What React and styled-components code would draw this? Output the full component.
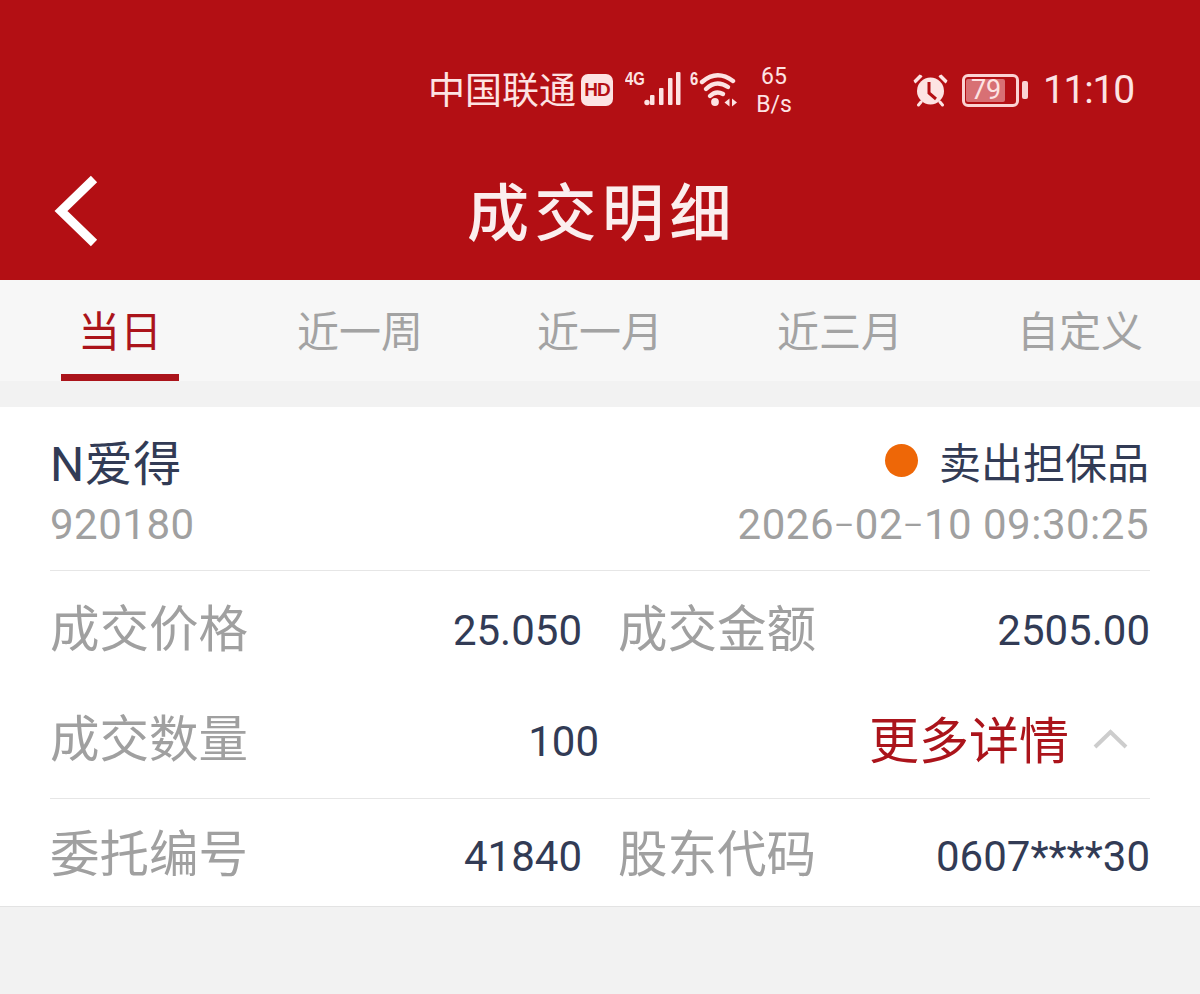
import React from 'react'
import styled, { createGlobalStyle } from 'styled-components'

const Global = createGlobalStyle`
  html, body { margin: 0; padding: 0; background: #f2f2f2; }
  body { font-family: Roboto, "Noto Sans CJK SC", sans-serif; overflow: hidden; }
`

const Page = styled.div`
  width: 1200px;
  height: 994px;
  background: #f2f2f2;
  overflow: hidden;
`

const Header = styled.header`
  background: #b30f14;
  height: 280px;
  padding-top: 50px;
  box-sizing: border-box;
  display: flex;
  flex-direction: column;
`

const StatusBar = styled.div`
  height: 80px;
  display: flex;
  align-items: center;
  padding: 0 66px 0 430px;
  color: #fde3e3;
`

const Carrier = styled.span`
  margin: 4px 0 0 -2px;
  width: 148px;
  font-size: 37px;
  line-height: 50px;
  white-space: nowrap;
`

const HdBadge = styled.span`
  width: 32px;
  height: 32px;
  margin-left: 5px;
  border-radius: 7px;
  background: #fde3e3;
  color: #b30f14;
  font: 700 19px/32px "Liberation Sans", sans-serif;
  letter-spacing: -1px;
  text-align: center;
`

const NetTag = styled.span`
  align-self: flex-start;
  margin: ${p => p.$top}px 0 0 ${p => p.$left}px;
  width: ${p => p.$width}px;
  font: 700 19px/18px "Liberation Sans", sans-serif;
  transform: scaleX(0.78);
  transform-origin: left center;
`

const Speed = styled.span`
  width: 40px;
  margin: 2px 0 0 15px;
  font-size: 23px;
  line-height: 28px;
  text-align: center;
  white-space: nowrap;
`

const Spacer = styled.span`
  flex: 1;
`

const BatteryBox = styled.span`
  position: relative;
  width: 57px;
  height: 33px;
  margin-left: 14px;
  border: 3px solid #fbd3d3;
  border-radius: 6px;
  box-sizing: border-box;
  flex: none;
`

const BatteryFill = styled.span`
  display: block;
  height: 23px;
  margin: 2px 0 0 1px;
  width: 39px;
  background: #d87074;
  border-radius: 2px;
`

const BatteryLevel = styled.span`
  position: absolute;
  top: 0;
  left: 6px;
  font-size: 27px;
  line-height: 27px;
  color: #fde3e3;
`

const BatteryCap = styled.span`
  width: 6px;
  height: 18px;
  margin-left: 3px;
  border-radius: 2px;
  background: #fbd3d3;
`

const Clock = styled.span`
  margin-left: 15px;
  font-size: 39px;
  letter-spacing: -1.2px;
  line-height: 82px;
`

const NavBar = styled.div`
  position: relative;
  height: 150px;
  display: flex;
  align-items: center;
  justify-content: center;
`

const BackLink = styled.a`
  position: absolute;
  left: 53px;
  top: 45px;
  display: block;
  line-height: 0;
`

const Title = styled.h1`
  margin: 20px 0 0 4px;
  font-size: 62px;
  font-weight: 500;
  letter-spacing: 5.5px;
  color: #fbeeee;
  line-height: 76px;
`

const Tabs = styled.nav`
  height: 101px;
  display: grid;
  grid-template-columns: repeat(5, 240px);
  background: #f7f7f7;
`

const Tab = styled.div`
  position: relative;
  height: 101px;
  text-align: center;
  font-size: 42px;
  line-height: 106px;
  color: ${p => (p.$active ? '#ab141b' : '#a3a3a3')};
  &::after {
    content: '';
    display: ${p => (p.$active ? 'block' : 'none')};
    position: absolute;
    left: 61px;
    bottom: 0;
    width: 118px;
    height: 7px;
    background: #ab141b;
  }
`

const Card = styled.section`
  margin-top: 26px;
  background: #fff;
  padding: 0 50px;
  height: 500px;
  box-sizing: border-box;
  border-bottom: 1px solid #e3e3e3;
`

const TopBlock = styled.div`
  height: 164px;
  border-bottom: 1px solid #e6e6e6;
  box-sizing: border-box;
`

const Line = styled.div`
  display: flex;
  justify-content: space-between;
  align-items: center;
  height: ${p => p.$height}px;
`

const StockName = styled.span`
  font-size: 48px;
  letter-spacing: 0.5px;
  color: #323b55;
`

const SideTag = styled.span`
  display: flex;
  align-items: center;
  padding-right: 1px;
  font-size: 42px;
  color: #323b55;
`

const Dot = styled.i`
  width: 33px;
  height: 33px;
  border-radius: 50%;
  margin: 0 21px 0 0;
  background: #ee6707;
`

const Muted = styled.span`
  padding-right: ${p => p.$inset || 0}px;
  font-size: 42px;
  letter-spacing: 0.5px;
  color: #a0a0a0;
`

const Dash = styled.span`
  font-size: 31px;
  vertical-align: 3px;
`

const Rows = styled.div`
  height: ${p => p.$height}px;
  border-bottom: ${p => (p.$line ? '1px solid #e6e6e6' : 'none')};
  box-sizing: border-box;
`

const Row = styled.div`
  display: grid;
  grid-template-columns: ${p => p.$cols || '532px 532px'};
  justify-content: space-between;
  height: ${p => p.$height}px;
  align-items: center;
`

const Cell = styled.div`
  display: flex;
  justify-content: space-between;
  align-items: center;
`

const Label = styled.span`
  margin-bottom: 7px;
  font-size: 49.5px;
  color: #a0a0a0;
  white-space: nowrap;
`

const Value = styled.span`
  margin-top: 4px;
  font-size: 42px;
  color: #323b55;
  white-space: nowrap;
`

const MoreLink = styled.a`
  display: flex;
  align-items: center;
  padding: 6px 22px 0 0;
  font-size: 50px;
  color: #ab141b;
  line-height: 60px;
`

const Chevron = styled.svg`
  margin: 0 0 6px 24px;
`

const Signal = () => (
  <svg width="37" height="36" viewBox="0 0 37 36">
    <circle cx="3" cy="30.5" r="2.7" fill="#fde3e3" />
    <rect x="6" y="23" width="4.5" height="10" rx="1" fill="#fde3e3" />
    <rect x="15" y="16" width="4.5" height="17" rx="1" fill="#fde3e3" />
    <rect x="24" y="6" width="4.5" height="27" rx="1" fill="#fde3e3" />
    <rect x="32" y="0" width="4.5" height="33" rx="1" fill="#fde3e3" />
  </svg>
)

const Wifi = () => (
  <svg width="40" height="40" viewBox="0 0 40 40">
    <g fill="none" stroke="#fde3e3" strokeWidth="4.4" strokeLinecap="round">
      <path d="M3 12 Q18 -1 34 11" />
      <path d="M7 19 Q17 9 29 17" />
      <path d="M11 26 Q17 20 24 24" />
    </g>
    <circle cx="16" cy="32" r="3.9" fill="#fde3e3" />
    <path d="M30.5 28.5 v8 l-5 -4 z M33 28.5 v8 l5 -4 z" fill="#fde3e3" />
  </svg>
)

const Alarm = () => (
  <svg width="35" height="34" viewBox="0 0 35 34" style={{ flex: 'none' }}>
    <circle cx="17.5" cy="18" r="13.5" fill="#fde3e3" />
    <path d="M0.5 7.5 L6.5 1.5 Q9 2 9.5 3.5 L2.5 10.5 Q1 9.5 0.5 7.5 Z M34.5 7.5 L28.5 1.5 Q26 2 25.5 3.5 L32.5 10.5 Q34 9.5 34.5 7.5 Z" fill="#fde3e3" />
    <path d="M8 29 L5.5 32 M27 29 L29.5 32" stroke="#fde3e3" strokeWidth="3" strokeLinecap="round" />
    <path d="M16 9 V20 L23 26" fill="none" stroke="#b30f14" strokeWidth="3" />
  </svg>
)

const tabs = ['当日', '近一周', '近一月', '近三月', '自定义']

export default function App() {
  return (
    <Page>
      <Global />
      <Header>
        <StatusBar>
          <Carrier>中国联通</Carrier>
          <HdBadge>HD</HdBadge>
          <NetTag $top={20} $left={12} $width={19}>4G</NetTag>
          <Signal />
          <NetTag $top={20} $left={9} $width={9}>6</NetTag>
          <Wifi />
          <Speed>65<br />B/s</Speed>
          <Spacer />
          <Alarm />
          <BatteryBox>
            <BatteryFill />
            <BatteryLevel>79</BatteryLevel>
          </BatteryBox>
          <BatteryCap />
          <Clock>11:10</Clock>
        </StatusBar>
        <NavBar>
          <BackLink>
            <svg width="46" height="72" viewBox="0 0 46 72">
              <path d="M41 4 L8 36 L41 68" fill="none" stroke="#fff" strokeWidth="9" />
            </svg>
          </BackLink>
          <Title>成交明细</Title>
        </NavBar>
      </Header>
      <Tabs>
        {tabs.map((t, i) => (
          <Tab key={t} $active={i === 0}>{t}</Tab>
        ))}
      </Tabs>
      <Card>
        <TopBlock>
          <Line $height={106}>
            <StockName>N爱得</StockName>
            <SideTag><Dot />卖出担保品</SideTag>
          </Line>
          <Line $height={22}>
            <Muted>920180</Muted>
            <Muted $inset={1}>2026<Dash>–</Dash>02<Dash>–</Dash>10 09:30:25</Muted>
          </Line>
        </TopBlock>
        <Rows $height={228} $line>
          <Row $height={115}>
            <Cell><Label>成交价格</Label><Value>25.050</Value></Cell>
            <Cell><Label>成交金额</Label><Value>2505.00</Value></Cell>
          </Row>
          <Row $height={106} $cols="549px auto">
            <Cell><Label>成交数量</Label><Value>100</Value></Cell>
            <MoreLink>
              更多详情
              <Chevron width="35" height="24" viewBox="0 0 35 24">
                <path d="M2 20 L17.5 5 L33 20" fill="none" stroke="#cdcdcd" strokeWidth="4" />
              </Chevron>
            </MoreLink>
          </Row>
        </Rows>
        <Row $height={110}>
          <Cell><Label>委托编号</Label><Value>41840</Value></Cell>
          <Cell><Label>股东代码</Label><Value>0607****30</Value></Cell>
        </Row>
      </Card>
    </Page>
  )
}
